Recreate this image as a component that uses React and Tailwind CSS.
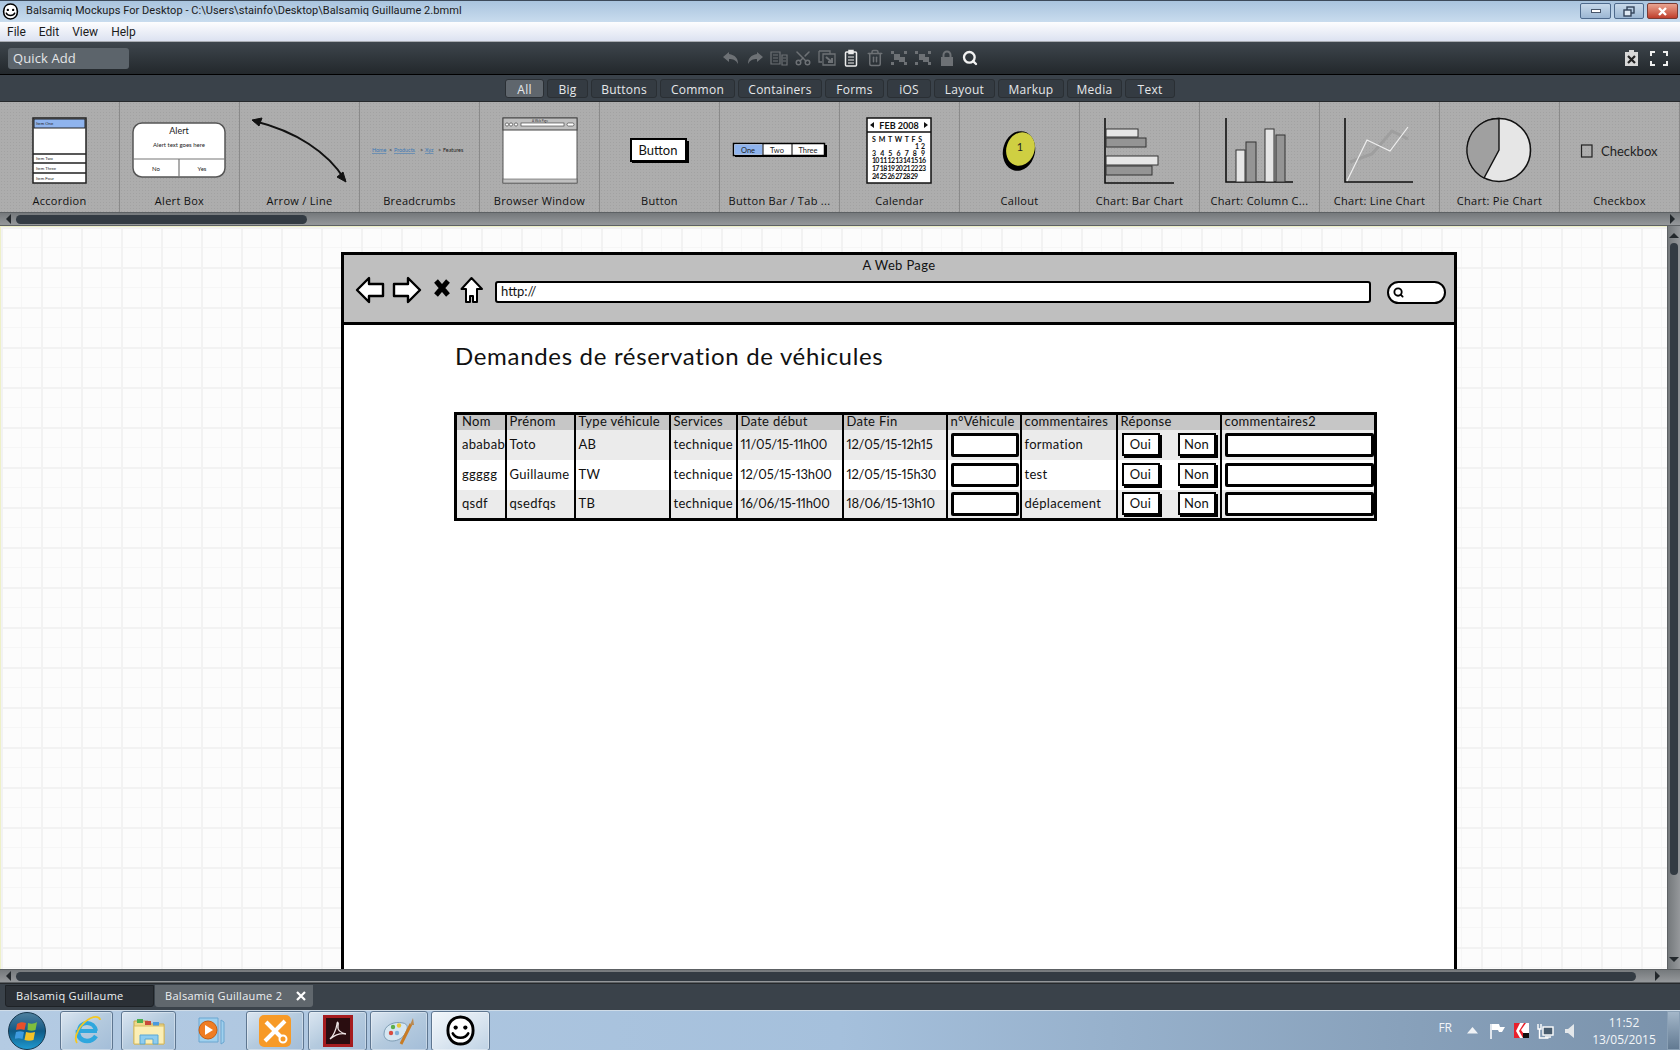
import { Scissors, Trash2, Search } from 'lucide-react';

const FILTERS = [
  ['All', 'w-[39px]'], ['Big', 'w-[41px]'], ['Buttons', 'w-[66px]'], ['Common', 'w-[75px]'],
  ['Containers', 'w-[84px]'], ['Forms', 'w-[59px]'], ['iOS', 'w-[44px]'], ['Layout', 'w-[61px]'],
  ['Markup', 'w-[66px]'], ['Media', 'w-[55px]'], ['Text', 'w-[50px]'],
];

const HEADERS = ['Nom', 'Prénom', 'Type véhicule', 'Services', 'Date début', 'Date Fin', 'n°Véhicule', 'commentaires', 'Réponse', 'commentaires2'];
const WIDTHS = ['w-[50px]', 'w-[69px]', 'w-[95px]', 'w-[67px]', 'w-[106px]', 'w-[104px]', 'w-[74px]', 'w-[96px]', 'w-[104px]', 'w-[155px]'];

const ROWS = [
  { nom: 'ababab', prenom: 'Toto', type: 'AB', debut: '11/05/15-11h00', fin: '12/05/15-12h15', com: 'formation' },
  { nom: 'ggggg', prenom: 'Guillaume', type: 'TW', debut: '12/05/15-13h00', fin: '12/05/15-15h30', com: 'test' },
  { nom: 'qsdf', prenom: 'qsedfqs', type: 'TB', debut: '16/06/15-11h00', fin: '18/06/15-13h10', com: 'déplacement' },
];

function Face({ size = 16 }) {
  return (
    <svg width={size} height={size} viewBox="0 0 32 32">
      <path d="M16 2C8 2 3 8 3 16c0 8 5 14 13 14s13-6 13-14C29 8 24 2 16 2z" fill="#fff" stroke="#000" strokeWidth="3" />
      <circle cx="11" cy="13" r="2.2" fill="#000" />
      <circle cx="21" cy="13" r="2.2" fill="#000" />
      <path d="M8 19c3 6 13 6 16 0" fill="none" stroke="#000" strokeWidth="2.6" strokeLinecap="round" />
    </svg>
  );
}

function Accordion() {
  return (
    <svg width="120" height="84" viewBox="0 0 120 84">
      <rect x="33" y="16" width="53" height="65" fill="#fff" stroke="#222" strokeWidth="1.5" />
      <rect x="34" y="17" width="51" height="9" fill="#8fb4ee" stroke="#222" strokeWidth="1" />
      <path d="M33 52h53M33 61h53M33 71h53" stroke="#222" strokeWidth="1.3" />
      <g fontSize="4.2" fontFamily="Liberation Sans, sans-serif" fill="#222">
        <text x="36" y="23">Item One</text>
        <text x="36" y="58">Item Two</text>
        <text x="36" y="68">Item Three</text>
        <text x="36" y="78">Item Four</text>
      </g>
    </svg>
  );
}

function AlertBox() {
  return (
    <svg width="120" height="84" viewBox="0 0 120 84">
      <rect x="13" y="21" width="92" height="54" rx="9" fill="#fff" stroke="#555" strokeWidth="1.5" />
      <path d="M13 57h92M59 57v18" stroke="#777" strokeWidth="1.2" />
      <g fontFamily="Lato, sans-serif" fill="#222" textAnchor="middle">
        <text x="59" y="32" fontSize="9">Alert</text>
        <text x="59" y="45" fontSize="6">Alert text goes here</text>
        <text x="36" y="69" fontSize="6">No</text>
        <text x="82" y="69" fontSize="6">Yes</text>
      </g>
    </svg>
  );
}

function ArrowLine() {
  return (
    <svg width="120" height="84" viewBox="0 0 120 84">
      <path d="M14 19C55 29 88 50 105 78" fill="none" stroke="#111" strokeWidth="2" />
      <path d="M12 18l10-2-3 8zM106 80l-9-5 6-5z" fill="#111" stroke="#111" />
    </svg>
  );
}

function Breadcrumbs() {
  return (
    <svg width="120" height="84" viewBox="0 0 120 84">
      <g fontFamily="Lato, sans-serif" fontSize="5.4">
        <text x="12" y="50" fill="#3a78b5" textDecoration="underline">Home</text>
        <text x="29" y="50" fill="#222">&gt;</text>
        <text x="34" y="50" fill="#3a78b5" textDecoration="underline">Products</text>
        <text x="60" y="50" fill="#222">&gt;</text>
        <text x="65" y="50" fill="#3a78b5" textDecoration="underline">Xyz</text>
        <text x="78" y="50" fill="#222">&gt;</text>
        <text x="83" y="50" fill="#222">Features</text>
      </g>
    </svg>
  );
}

function BrowserIcon() {
  return (
    <svg width="120" height="84" viewBox="0 0 120 84">
      <rect x="23" y="16" width="74" height="65" fill="#fff" stroke="#555" strokeWidth="1" />
      <rect x="23" y="16" width="74" height="12" fill="#c0c0c0" stroke="#444" strokeWidth="1" />
      <rect x="23" y="77" width="74" height="4" fill="#c0c0c0" stroke="#555" strokeWidth="0.6" />
      <g fill="#fff" stroke="#333" strokeWidth="0.6">
        <circle cx="27" cy="22.5" r="1.6" /><circle cx="31" cy="22.5" r="1.6" /><circle cx="36" cy="22.5" r="1.6" />
        <rect x="41" y="21" width="43" height="3" /><rect x="87" y="21" width="7" height="3" rx="1.5" />
      </g>
      <text x="60" y="19.5" textAnchor="middle" fontSize="3" fill="#333" fontFamily="Lato, sans-serif">A Web Page</text>
    </svg>
  );
}

function ButtonIcon() {
  return (
    <svg width="120" height="84" viewBox="0 0 120 84">
      <rect x="32" y="39" width="57" height="22" fill="#000" />
      <rect x="31" y="37" width="55" height="22" fill="#fff" stroke="#000" strokeWidth="2" />
      <text x="58" y="53" textAnchor="middle" fontSize="13" fill="#111" fontFamily="Lato, sans-serif">Button</text>
    </svg>
  );
}

function ButtonBar() {
  return (
    <svg width="120" height="84" viewBox="0 0 120 84">
      <rect x="15" y="43" width="92" height="12" fill="#000" />
      <rect x="13.5" y="41.5" width="91" height="12" fill="#fff" stroke="#000" strokeWidth="1.5" />
      <rect x="14.5" y="42.5" width="28" height="10" fill="#8fb4ee" />
      <path d="M43 42v11M72 42v11" stroke="#000" />
      <g fontSize="7.5" textAnchor="middle" fontFamily="Lato, sans-serif" fill="#222">
        <text x="28" y="50.5">One</text><text x="57" y="50.5">Two</text><text x="88" y="50.5">Three</text>
      </g>
    </svg>
  );
}

function CalendarIcon() {
  const weeks = [
    ['S M T W T F S', 32, 40, 50],
    ['1 2', 75, 47, 10],
    ['3 4 5 6 7 8 9', 32, 54, 53],
    ['10 11 12 13 14 15 16', 32, 61, 54],
    ['17 18 19 20 21 22 23', 32, 69, 54],
    ['24 25 26 27 28 29', 32, 77, 46],
  ];
  return (
    <svg width="120" height="84" viewBox="0 0 120 84">
      <rect x="27" y="16" width="64" height="65" fill="#fff" stroke="#111" strokeWidth="1.5" />
      <path d="M27 30h64" stroke="#111" strokeWidth="1.5" />
      <path d="M30 23l4-3v6zM88 23l-4-3v6z" fill="#111" />
      <text x="59" y="26.5" textAnchor="middle" fontSize="9" fontWeight="700" fill="#111" fontFamily="Lato, sans-serif">FEB 2008</text>
      <g fontSize="7" fontWeight="700" fontFamily="Lato, sans-serif" fill="#111">
        {weeks.map(([w, x, y, len]) => <text key={w} x={x} y={y} textLength={len} lengthAdjust="spacing">{w}</text>)}
      </g>
    </svg>
  );
}

function Callout() {
  return (
    <svg width="120" height="84" viewBox="0 0 120 84">
      <ellipse cx="59" cy="49" rx="16" ry="20" transform="rotate(14 59 49)" fill="#000" />
      <ellipse cx="60.5" cy="47" rx="14" ry="17" transform="rotate(20 60.5 47)" fill="#cfcf42" />
      <text x="60" y="49" textAnchor="middle" fontSize="11" fill="#222" fontFamily="Lato, sans-serif">1</text>
    </svg>
  );
}

function BarChart() {
  return (
    <svg width="120" height="84" viewBox="0 0 120 84">
      <path d="M25 16v65h69" fill="none" stroke="#111" strokeWidth="1.6" />
      <g stroke="#333" strokeWidth="1">
        <rect x="26" y="27" width="32" height="8" fill="#e6e6e6" />
        <rect x="26" y="36" width="40" height="9" fill="#949494" />
        <rect x="26" y="54" width="52" height="9" fill="#e6e6e6" />
        <rect x="26" y="64" width="46" height="9" fill="#949494" />
      </g>
    </svg>
  );
}

function ColumnChart() {
  return (
    <svg width="120" height="84" viewBox="0 0 120 84">
      <path d="M26 16v64h67" fill="none" stroke="#111" strokeWidth="1.6" />
      <g stroke="#333" strokeWidth="1">
        <rect x="36" y="48" width="9" height="32" fill="#e6e6e6" />
        <rect x="46" y="40" width="10" height="40" fill="#949494" />
        <rect x="65" y="27" width="9" height="53" fill="#e6e6e6" />
        <rect x="76" y="33" width="9" height="47" fill="#949494" />
      </g>
    </svg>
  );
}

function LineChart() {
  return (
    <svg width="120" height="84" viewBox="0 0 120 84">
      <path d="M25 16v64h68" fill="none" stroke="#111" strokeWidth="1.6" />
      <path d="M30 60l22-8 20-23 16 8" fill="none" stroke="#999" strokeWidth="3" opacity="0.7" />
      <path d="M27 79l20-41 23 11 18-24" fill="none" stroke="#efefef" strokeWidth="1.2" />
    </svg>
  );
}

function PieChart() {
  return (
    <svg width="120" height="84" viewBox="0 0 120 84">
      <circle cx="59" cy="48" r="31.5" fill="#e6e6e6" stroke="#111" strokeWidth="1.6" />
      <path d="M59 16.5V48L44 76A31.5 31.5 0 0 1 59 16.5z" fill="#a0a0a0" stroke="#111" strokeWidth="1.4" />
    </svg>
  );
}

function CheckboxIcon() {
  return (
    <svg width="120" height="84" viewBox="0 0 120 84">
      <rect x="21.5" y="43" width="10.5" height="12" fill="none" stroke="#222" strokeWidth="1.2" />
      <text x="41" y="54" fontSize="13" fill="#222" fontFamily="Lato, sans-serif">Checkbox</text>
    </svg>
  );
}

const LIBRARY = [
  ['Accordion', Accordion], ['Alert Box', AlertBox], ['Arrow / Line', ArrowLine], ['Breadcrumbs', Breadcrumbs],
  ['Browser Window', BrowserIcon], ['Button', ButtonIcon], ['Button Bar / Tab ...', ButtonBar], ['Calendar', CalendarIcon],
  ['Callout', Callout], ['Chart: Bar Chart', BarChart], ['Chart: Column C...', ColumnChart], ['Chart: Line Chart', LineChart],
  ['Chart: Pie Chart', PieChart], ['Checkbox', CheckboxIcon],
];

function WindowButtons() {
  return (
    <div className="flex gap-[3px] pr-[2px] pt-[2px]">
      <div className="w-[31px] h-[16px] rounded-[2px] border border-[#4e6a8c] bg-gradient-to-b from-[#c8d9ea] to-[#9cb7d3] flex items-center justify-center">
        <div className="w-[10px] h-[4px] bg-white border border-[#48566a]" />
      </div>
      <div className="w-[30px] h-[16px] rounded-[2px] border border-[#4e6a8c] bg-gradient-to-b from-[#c8d9ea] to-[#9cb7d3] flex items-center justify-center">
        <svg width="12" height="11" viewBox="0 0 12 11">
          <rect x="4" y="1" width="7" height="6" fill="none" stroke="#33435a" strokeWidth="1.4" />
          <rect x="1" y="4" width="7" height="6" fill="#dfe9f3" stroke="#33435a" strokeWidth="1.4" />
        </svg>
      </div>
      <div className="w-[31px] h-[16px] rounded-[2px] border border-[#7a3b33] bg-gradient-to-b from-[#e9a491] to-[#bf3d2b] flex items-center justify-center">
        <svg width="11" height="9" viewBox="0 0 11 9"><path d="M2 1l7 7M9 1L2 8" stroke="#fff" strokeWidth="2.4" /></svg>
      </div>
    </div>
  );
}

function GroupIcon({ small }) {
  return (
    <svg width="18" height="16" viewBox="0 0 18 16" fill="#6d7175">
      <rect x="1" y="1" width="3" height="3" /><rect x="14" y="1" width="3" height="3" /><rect x="1" y="12" width="3" height="3" /><rect x="14" y="12" width="3" height="3" />
      <rect x={small ? 5 : 4} y="4" width="6" height="6" /><rect x="9" y="7" width="6" height="5" />
    </svg>
  );
}

function ToolIcons() {
  const gray = '#6d7175';
  return (
    <div className="flex items-center gap-[6px] h-full">
      <svg width="18" height="16" viewBox="0 0 18 16"><path d="M7 2L1 7l6 5V9c4 0 7 1 9 5 0-6-3-9-9-10z" fill={gray} /></svg>
      <svg width="18" height="16" viewBox="0 0 18 16"><path d="M11 2l6 5-6 5V9c-4 0-7 1-9 5 0-6 3-9 9-10z" fill={gray} /></svg>
      <svg width="18" height="16" viewBox="0 0 18 16" fill="none" stroke={gray} strokeWidth="1.2"><path d="M1 2h9v12H1zM3 5h5M3 8h5M3 11h5M12 5h5v10h-5zM13 8h3M13 11h3" /></svg>
      <Scissors size={18} color={gray} className="-rotate-90" />
      <svg width="18" height="16" viewBox="0 0 18 16" fill="none" stroke={gray} strokeWidth="1.3"><path d="M1 1h11v3M1 1v11h3M5 4h12v11H5z" /><path d="M8 7l6 5M14 8v4h-4" strokeWidth="2" /></svg>
      <svg width="18" height="18" viewBox="0 0 18 18" fill="none" stroke="#ececec" strokeWidth="1.5">
        <rect x="3.5" y="3" width="11" height="14" rx="1" /><path d="M7 1.5h4v3H7z" fill="#ececec" /><path d="M6 8h6M6 11h6M6 14h6" strokeWidth="1.2" />
      </svg>
      <Trash2 size={18} color={gray} />
      <GroupIcon />
      <GroupIcon small />
      <svg width="18" height="18" viewBox="0 0 18 18" fill={gray}>
        <path d="M5.5 8V6a3.500 3.500 0 0 1 7 0v2" fill="none" stroke={gray} strokeWidth="2" /><rect x="3" y="8" width="12" height="9" />
      </svg>
      <Search size={16} color="#f2f2f2" strokeWidth={3.5} />
    </div>
  );
}

function NavIcons() {
  return (
    <div className="flex items-center mb-[4px]">
      <svg width="30" height="28" viewBox="0 0 30 28" className="mr-[7px]">
        <path d="M2 14L14 2v6h14v12H14v6z" fill="#fff" stroke="#000" strokeWidth="2.4" strokeLinejoin="round" />
      </svg>
      <svg width="30" height="28" viewBox="0 0 30 28" className="mr-[11px]">
        <path d="M28 14L16 2v6H2v12h14v6z" fill="#fff" stroke="#000" strokeWidth="2.4" strokeLinejoin="round" />
      </svg>
      <svg width="18" height="18" viewBox="0 0 18 18" className="mr-[9px] mb-[4px]">
        <path d="M3 2l12 14M15 2L3 16" stroke="#000" strokeWidth="5" />
      </svg>
      <svg width="23" height="28" viewBox="0 0 23 28">
        <path d="M11.5 2L1.5 13H6v13h4v-6h3v6h4V13h5z" fill="#fff" stroke="#000" strokeWidth="2" strokeLinejoin="round" />
      </svg>
    </div>
  );
}

function SketchButton({ label }) {
  return (
    <div className="w-[38px] h-[23px] bg-white border-2 border-black shadow-[2px_2px_0_#000] flex items-center justify-center text-[13px] leading-none text-[#111]">
      {label}
    </div>
  );
}

function SketchInput({ className }) {
  return <div className={`h-[24px] bg-white border-[3px] border-black rounded-[2px] ${className}`} />;
}

function MockTable() {
  const cell = 'border-r-2 border-black px-[3px] align-middle';
  const dateCell = `${cell} tracking-[-0.2px]`;
  return (
    <table className="table-fixed border-collapse w-[920px] -ml-[1px] border-[3px] border-black text-[13px] text-[#111] tracking-[0.3px] whitespace-nowrap proportional-nums">
      <thead>
        <tr className="h-[16px] bg-[#c6c6c6] text-left leading-none">
          {HEADERS.map((h, i) => (
            <th key={h} className={`${WIDTHS[i]} ${cell} font-normal pb-[1px] ${i === 0 ? 'pl-[5px]' : ''}`}>{h}</th>
          ))}
        </tr>
      </thead>
      <tbody>
        {ROWS.map((r, i) => (
          <tr key={r.nom} className={`h-[30px] ${i % 2 === 0 ? 'bg-[#ebebeb]' : 'bg-white'}`}>
            <td className={`${cell} pl-[5px]`}>{r.nom}</td>
            <td className={cell}>{r.prenom}</td>
            <td className={cell}>{r.type}</td>
            <td className={cell}>technique</td>
            <td className={dateCell}>{r.debut}</td>
            <td className={dateCell}>{r.fin}</td>
            <td className={cell}><SketchInput className="w-[68px]" /></td>
            <td className={cell}>{r.com}</td>
            <td className={cell}>
              <div className="flex justify-between pl-[1px] pr-[1px]">
                <SketchButton label="Oui" />
                <SketchButton label="Non" />
              </div>
            </td>
            <td className="px-[3px] align-middle"><SketchInput className="w-[149px]" /></td>
          </tr>
        ))}
      </tbody>
    </table>
  );
}

function TaskButton({ className, children }) {
  return (
    <div className={`h-[40px] rounded-[3px] border border-[#5e7690] bg-gradient-to-br from-[#dbe6f1] via-[#b4cade] to-[#a3bdd8] shadow-[inset_0_0_0_1px_rgba(255,255,255,0.35)] flex items-center justify-center ${className}`}>
      {children}
    </div>
  );
}

function Orb() {
  return (
    <div className="w-[38px] h-[38px] rounded-full border border-[#16384f] bg-gradient-to-b from-[#4d7f9d] via-[#0f5a86] to-[#1f9ad0] flex items-center justify-center">
      <svg width="24" height="22" viewBox="0 0 24 22">
        <path d="M2 4c3-2 6-2 9-1l-1.5 7C7 9 4 9 1 10z" fill="#e8502a" />
        <path d="M13 3c3 1 6 1 9-1l-1.5 8c-3 1-5 1-8 0z" fill="#7fbe3c" />
        <path d="M1 12c3-1 5-1 8 0l-1.5 7c-3-1-5-1-8 0z" fill="#3f9be0" />
        <path d="M11 12c3 1 6 1 9 0l-1.5 8c-3 1-6 1-9 0z" fill="#f5c227" />
      </svg>
    </div>
  );
}

function TrayIcons() {
  return (
    <>
      <svg width="11" height="7" viewBox="0 0 11 7" className="ml-[15px]"><path d="M5.5 0L11 6.5H0z" fill="#f0f3f6" /></svg>
      <svg width="17" height="16" viewBox="0 0 17 16" className="ml-[11px]"><path d="M2 1v15" stroke="#fff" strokeWidth="1.5" /><path d="M3 1h7l1 3h5l-3 5h-3l-1-2H3z" fill="#fff" /></svg>
      <svg width="15" height="15" viewBox="0 0 15 15" className="ml-[8px]">
        <rect width="15" height="15" fill="#fff" />
        <path d="M0 0h12L7 7l6 8H0z" fill="#e8202c" />
        <path d="M6 0h4L5 8l4 7H6L2 8z" fill="#fff" />
        <rect x="9" y="10" width="6" height="5" fill="#111" />
      </svg>
      <svg width="17" height="16" viewBox="0 0 17 16" className="ml-[8px]" fill="none" stroke="#fff" strokeWidth="1.4">
        <path d="M1 1v5h3V1M2.5 6v9h9" /><rect x="6" y="4" width="10" height="8" fill="#485c6e" /><path d="M8 14h6" />
      </svg>
      <svg width="10" height="14" viewBox="0 0 10 14" className="ml-[11px]"><path d="M0 5h3l6-5v14L3 9H0z" fill="#e3e7ea" /></svg>
    </>
  );
}

export default function App() {
  return (
    <div className="w-[1680px] h-[1050px] overflow-hidden flex flex-col font-['Open_Sans',sans-serif] bg-[#3a424a]">
      {/* title bar */}
      <div className="h-[22px] shrink-0 flex items-start bg-gradient-to-b from-[#a9c4de] to-[#c9dcee] border-t border-[#3d4a5a]">
        <div className="pl-[2px] pt-[2px] w-[26px]"><Face size={17} /></div>
        <div className="font-['Roboto',sans-serif] text-[11px] leading-[20px] text-[#1b1b1b] tracking-[0.05px]">
          Balsamiq Mockups For Desktop - C:\Users\stainfo\Desktop\Balsamiq Guillaume 2.bmml
        </div>
        <div className="ml-auto"><WindowButtons /></div>
      </div>

      {/* menu */}
      <div className="h-[20px] shrink-0 flex items-center gap-[13px] pl-[7px] font-['Roboto',sans-serif] text-[12px] text-[#1b1b1b] bg-gradient-to-b from-[#fdfdfe] to-[#dce2f1] border-b border-[#a9adb3]">
        <span>File</span><span>Edit</span><span>View</span><span>Help</span>
      </div>

      {/* toolbar */}
      <div className="h-[33px] shrink-0 flex items-center pl-[8px] bg-gradient-to-b from-[#3e464d] to-[#23282c] border-b border-black">
        <div className="w-[121px] h-[21px] mt-[1px] rounded-[3px] bg-[#5c646b] text-[#e4e6e8] text-[13px] leading-[21px] pl-[5px] tracking-[0.1px]">Quick Add</div>
        <div className="h-full ml-[593px]"><ToolIcons /></div>
        <div className="ml-auto flex items-center gap-[11px] pr-[12px]">
          <svg width="15" height="16" viewBox="0 0 15 16"><path d="M1 2h13v14H1z" fill="#d8d8d8" /><path d="M5 0h5v3H5z" fill="#d8d8d8" /><path d="M4 6l7 7M11 6l-7 7" stroke="#222" strokeWidth="2.2" /></svg>
          <svg width="18" height="15" viewBox="0 0 18 15" fill="none" stroke="#eee" strokeWidth="2"><path d="M1 5V1h4M13 1h4v4M1 10v4h4M17 10v4h-4" /></svg>
        </div>
      </div>

      {/* filter tabs */}
      <div className="h-[27px] shrink-0 flex gap-[3px] pl-[505px] pt-[4px] bg-[#3a424a] border-b border-[#26292c]">
        {FILTERS.map(([label, w], i) => (
          <div key={label} className={`${w} h-[19px] rounded-[3px] text-center text-[12px] leading-[19px] tracking-[0.25px] text-[#e6e8ea] border border-[#2a2f34] ${i === 0 ? 'bg-[#5f666d]' : 'bg-[#343b42]'}`}>
            {label}
          </div>
        ))}
      </div>

      {/* component library */}
      <div className="h-[110px] shrink-0 flex overflow-hidden bg-[#adadad] bg-[radial-gradient(#a2a2a2_1px,transparent_1px)] bg-[size:3px_3px]">
        {LIBRARY.map(([label, Icon]) => (
          <div key={label} className="w-[120px] shrink-0 border-r border-[#8a8a8a]">
            <Icon />
            <div className="mt-[8px] text-center text-[11px] leading-[14px] tracking-[0.3px] text-[#111] whitespace-nowrap">{label}</div>
          </div>
        ))}
      </div>

      {/* library scrollbar */}
      <div className="h-[14px] shrink-0 flex items-center bg-gradient-to-b from-[#75797c] to-[#95989b] border-y border-[#5d6164]">
        <div className="pl-[6px] w-[16px]"><div className="w-0 h-0 border-y-[5px] border-y-transparent border-r-[5px] border-r-[#23282c]" /></div>
        <div className="w-[291px] h-[9px] rounded-full bg-[#333b43]" />
        <div className="ml-auto pr-[5px]"><div className="w-0 h-0 border-y-[5px] border-y-transparent border-l-[5px] border-l-[#23282c]" /></div>
      </div>

      {/* canvas + vertical scrollbar */}
      <div className="flex-1 min-h-0 flex">
        <div className="flex-1 min-w-0 overflow-hidden pl-[340px] pt-[25px] border-l border-t border-[#eef0c8] bg-[#fcfcfc] bg-[linear-gradient(#f2f2f2_2px,transparent_2px),linear-gradient(90deg,#f2f2f2_2px,transparent_2px),linear-gradient(#f6f6f6_1px,transparent_1px),linear-gradient(90deg,#f6f6f6_1px,transparent_1px)] bg-[size:40px_40px,40px_40px,20px_20px,20px_20px]">
          <div className="w-[1116px] h-[800px] bg-white border-[3px] border-black font-['Lato',sans-serif]">
            <div className="h-[70px] bg-[#bfbfbf] border-b-[3px] border-black">
              <div className="text-center text-[13px] leading-[15px] pt-[3px] tracking-[0.35px] text-[#111]">A Web Page</div>
              <div className="flex items-center pl-[11px] pt-[3px]">
                <NavIcons />
                <div className="ml-[12px] w-[876px] h-[22px] bg-white border-[2.5px] border-black rounded-[3px] text-[13px] leading-[17px] pl-[4px] text-[#111]">http://</div>
                <div className="ml-[16px] w-[59px] h-[23px] bg-white border-[2.5px] border-black rounded-full flex items-center pl-[4px]">
                  <Search size={11} color="#000" strokeWidth={4} />
                </div>
              </div>
            </div>
            <div className="pl-[111px] pt-[15px]">
              <h1 className="text-[24px] leading-[32px] font-normal tracking-[0.68px] text-[#111]">Demandes de réservation de véhicules</h1>
              <div className="mt-[40px]"><MockTable /></div>
            </div>
          </div>
        </div>
        <div className="w-[13px] shrink-0 flex flex-col items-center bg-gradient-to-r from-[#75797c] to-[#95989b] border-l border-[#5d6164]">
          <div className="mt-[7px] w-0 h-0 border-x-[5px] border-x-transparent border-b-[5px] border-b-[#23282c]" />
          <div className="mt-[5px] w-[8px] h-[632px] rounded-full bg-[#333b43]" />
          <div className="mt-auto mb-[7px] w-0 h-0 border-x-[5px] border-x-transparent border-t-[5px] border-t-[#23282c]" />
        </div>
      </div>

      {/* canvas scrollbar */}
      <div className="h-[14px] shrink-0 flex items-center bg-gradient-to-b from-[#75797c] to-[#95989b] border-y border-[#5d6164]">
        <div className="pl-[6px] w-[16px]"><div className="w-0 h-0 border-y-[5px] border-y-transparent border-r-[5px] border-r-[#23282c]" /></div>
        <div className="w-[1620px] h-[9px] rounded-full bg-[#333b43]" />
        <div className="ml-[19px]"><div className="w-0 h-0 border-y-[5px] border-y-transparent border-l-[5px] border-l-[#23282c]" /></div>
      </div>

      {/* document tabs */}
      <div className="h-[27px] shrink-0 flex items-end pl-[5px] pb-[3px] gap-[1px] bg-[#3a424a] border-t border-[#26292c]">
        <div className="w-[149px] h-[22px] rounded-b-[3px] bg-[#2b3036] border border-[#1e2226] text-[11px] leading-[20px] pl-[10px] tracking-[0.3px] text-[#eef0f2]">Balsamiq Guillaume</div>
        <div className="w-[158px] h-[22px] rounded-b-[3px] bg-[#60676d] text-[11px] leading-[22px] pl-[10px] pr-[7px] tracking-[0.3px] text-[#eef0f2] flex justify-between items-center">
          <span>Balsamiq Guillaume 2</span>
          <svg width="10" height="10" viewBox="0 0 10 10"><path d="M1 1l8 8M9 1L1 9" stroke="#fff" strokeWidth="2.2" /></svg>
        </div>
      </div>

      {/* windows taskbar */}
      <div className="h-[40px] shrink-0 flex items-center pl-[8px] bg-gradient-to-r from-[#b4cbe3] via-[#a5c0dc] to-[#7a92ab] border-t border-[#cfdce8]">
        <Orb />
        <TaskButton className="w-[53px] ml-[14px]">
          <svg width="32" height="32" viewBox="0 0 32 32">
            <path d="M26 16H8c0-5 3.5-8 8-8s8 3 9 8" fill="none" stroke="#2fa7de" strokeWidth="4" />
            <path d="M7 15c-1 6 3 11 9 11 4 0 7-2 9-5" fill="none" stroke="#2fa7de" strokeWidth="4.5" />
            <path d="M6 28C2 22 9 8 20 3c5-2 9-1 9 2" fill="none" stroke="#f4c721" strokeWidth="1.8" />
          </svg>
        </TaskButton>
        <TaskButton className="w-[55px] ml-[8px]">
          <svg width="34" height="30" viewBox="0 0 34 30">
            <path d="M2 5h14l2 3h14v20H2z" fill="#eed98a" stroke="#c6a850" />
            <rect x="5" y="3" width="6" height="4" fill="#4caf50" /><rect x="13" y="5" width="6" height="4" fill="#c94a3a" /><rect x="21" y="6" width="6" height="4" fill="#4a9adf" />
            <path d="M2 10h30v18H2z" fill="#fbeeb5" stroke="#d9bd62" />
            <path d="M8 28v-9h18v9h-5v-5h-8v5z" fill="#8ecdf0" stroke="#5ba7d4" />
          </svg>
        </TaskButton>
        <div className="w-[70px] flex justify-center">
          <svg width="30" height="32" viewBox="0 0 30 32">
            <path d="M3 3h19v24H3z" fill="#9fd0ee" stroke="#6aa6d0" />
            <path d="M25 5l3 2v20l-3 2z" fill="#9fd0ee" stroke="#6aa6d0" />
            <circle cx="12" cy="15" r="9" fill="#ef7d23" stroke="#c85d10" />
            <path d="M9 10l8 5-8 5z" fill="#fff" />
          </svg>
        </div>
        <TaskButton className="w-[58px]">
          <svg width="32" height="32" viewBox="0 0 32 32">
            <rect width="32" height="32" rx="5" fill="#f79a27" />
            <path d="M7 7l18 18" stroke="#fff" strokeWidth="4" />
            <path d="M26 6l-9 9M6 26l9-9" stroke="#fff" strokeWidth="4" />
            <circle cx="24" cy="24" r="3.5" fill="#f79a27" stroke="#fff" strokeWidth="2" />
          </svg>
        </TaskButton>
        <TaskButton className="w-[59px] ml-[4px]">
          <svg width="30" height="32" viewBox="0 0 30 32">
            <rect x="1.5" y="1.5" width="27" height="29" fill="#2a0d10" stroke="#a51c1f" strokeWidth="3" />
            <path d="M7 24c3-3 6-9 7-15 0-3 2-2 1 2-1 4 3 7 8 8-5-1-11 1-16 5z" fill="none" stroke="#f0e6e6" strokeWidth="1.3" />
          </svg>
        </TaskButton>
        <TaskButton className="w-[58px] ml-[3px]">
          <svg width="34" height="30" viewBox="0 0 34 30">
            <path d="M2 18C2 9 12 5 21 7c5 1 5 5 3 9-3 6-8 9-14 9-5 0-8-3-8-7z" fill="#d5e6f1" stroke="#7f9db5" />
            <circle cx="9" cy="17" r="2.2" fill="#d94c3f" /><circle cx="11" cy="11" r="2.2" fill="#5cae4a" /><circle cx="17" cy="9.5" r="2.2" fill="#e8c63a" /><circle cx="15" cy="17" r="2.2" fill="#7fb2da" />
            <path d="M19 28l10-20" stroke="#c87c25" strokeWidth="3" /><path d="M28 9l3-7 1 7z" fill="#b98a52" />
          </svg>
        </TaskButton>
        <TaskButton className="w-[59px] ml-[3px] from-[#f2f6fa] via-[#dce7f1] to-[#bfd2e4]">
          <Face size={31} />
        </TaskButton>
        <div className="ml-auto flex items-center h-full text-[#f2f5f8]">
          <span className="text-[12px] leading-none mb-[5px]">FR</span>
          <TrayIcons />
          <div className="w-[84px] ml-[7px] text-center text-[12px] leading-[17px]">
            <div>11:52</div>
            <div>13/05/2015</div>
          </div>
          <div className="w-[13px] h-full ml-[1px] border border-[#8aa0b5] bg-gradient-to-b from-[#a4b7c9] to-[#627a92]" />
        </div>
      </div>
    </div>
  );
}
